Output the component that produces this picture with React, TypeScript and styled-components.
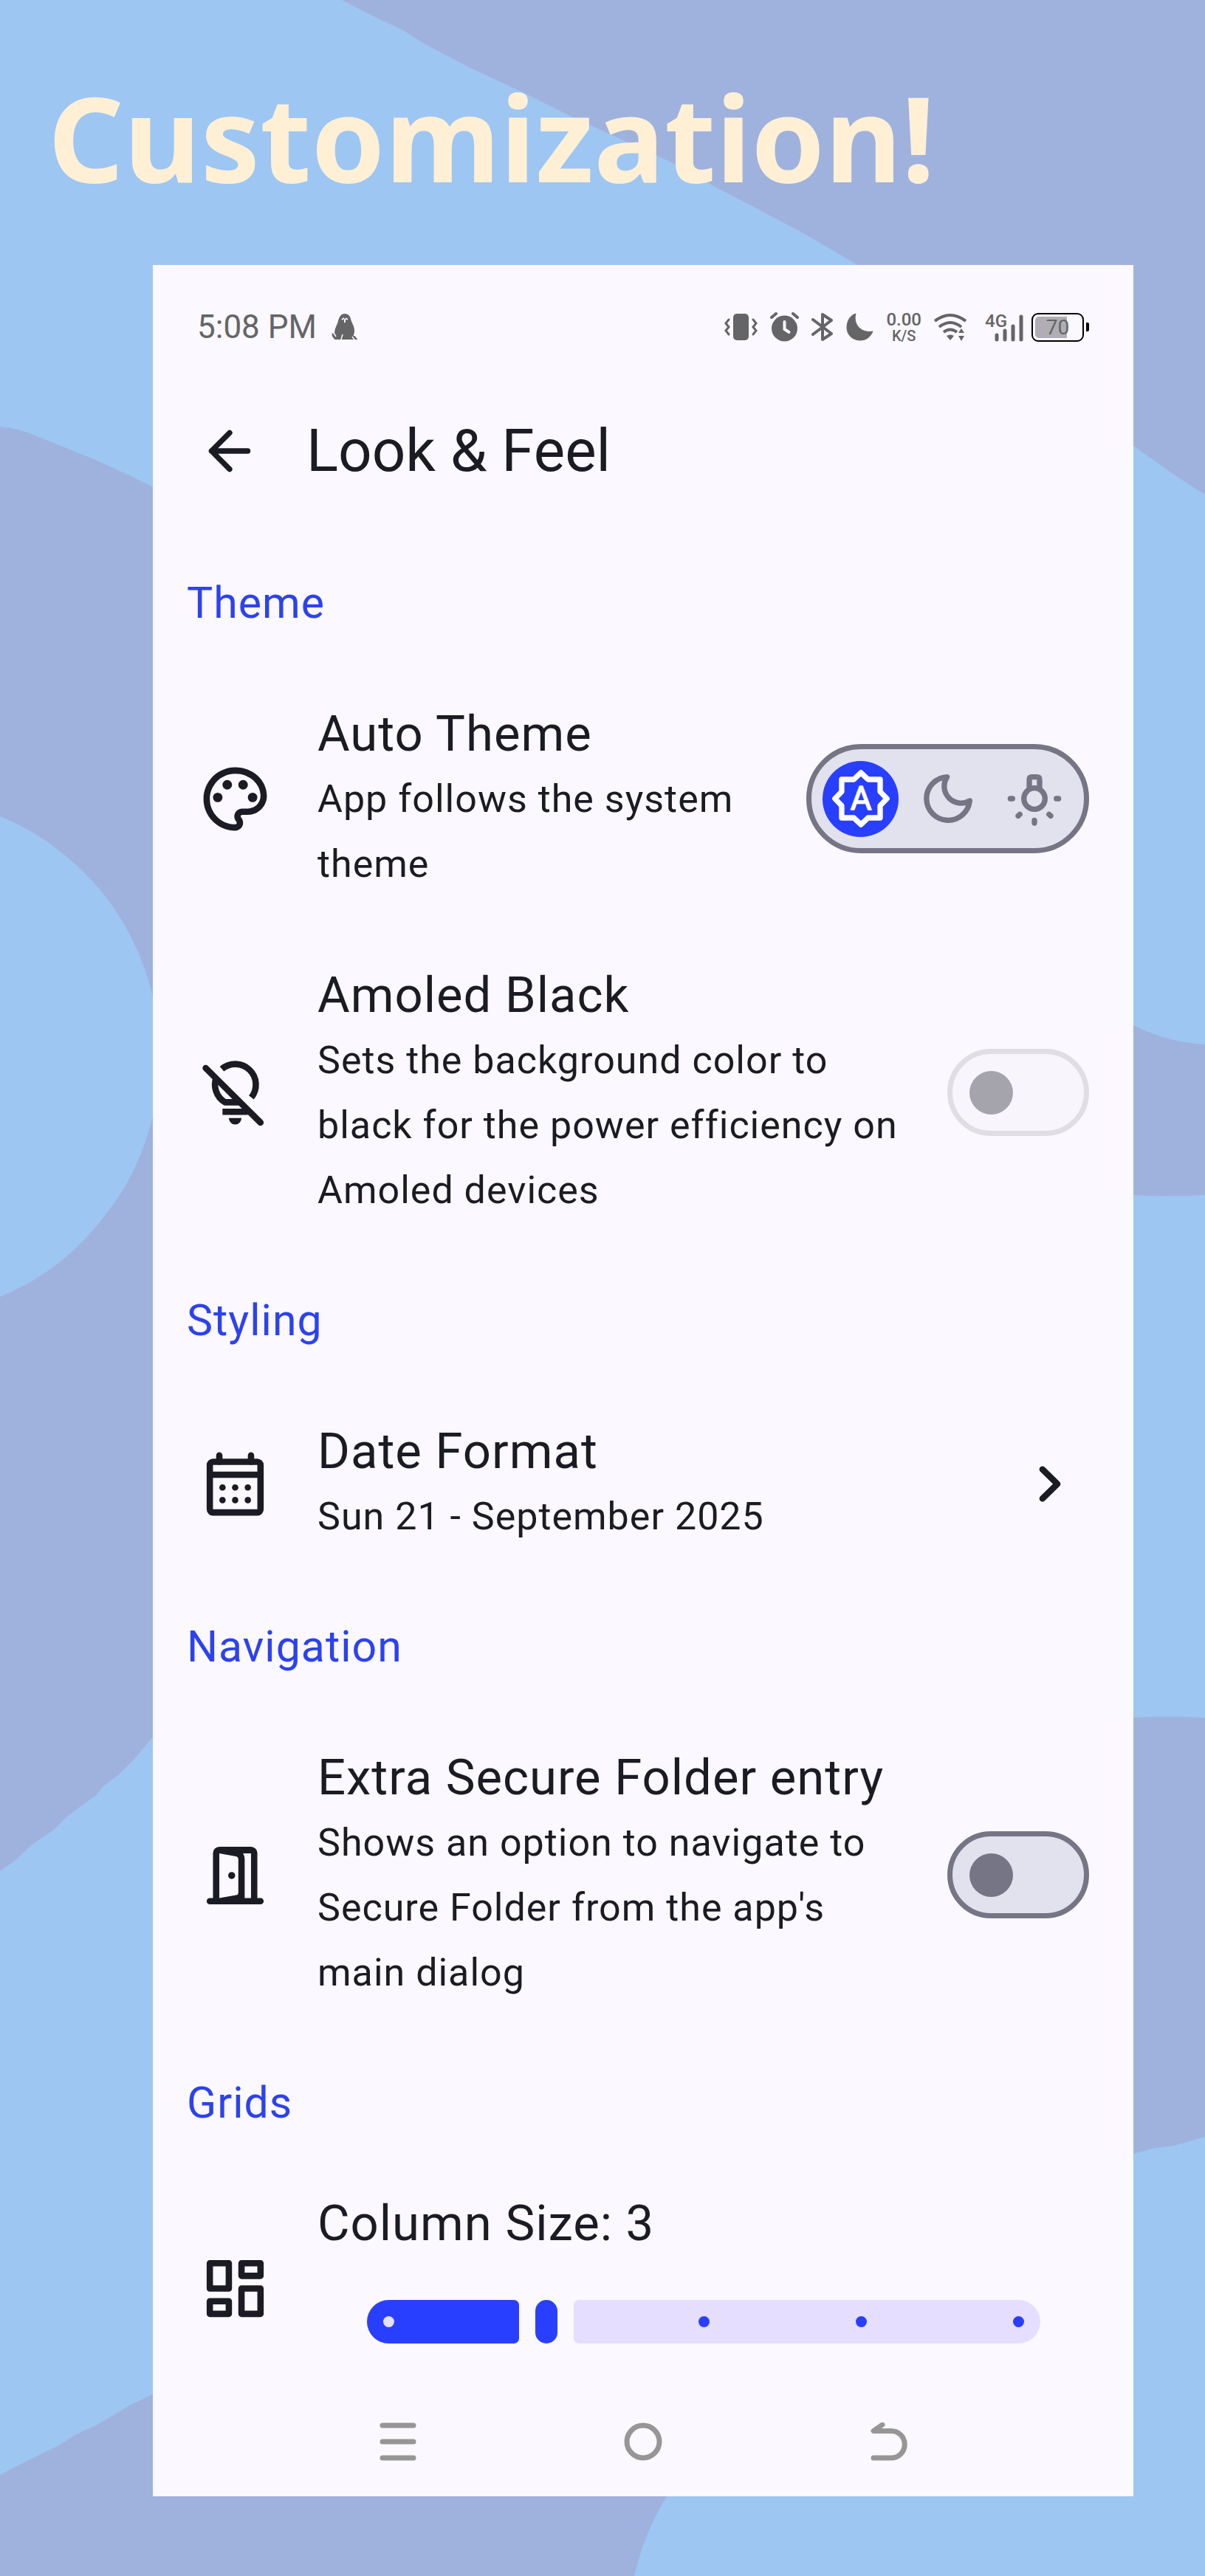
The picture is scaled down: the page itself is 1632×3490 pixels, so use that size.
import React, { useState } from "react";
import type { ReactNode } from "react";
import styled, { createGlobalStyle, css } from "styled-components";

const color = {
  sky: "#9dc6f2",
  haze: "#9fb2dd",
  cream: "#fff0d5",
  surface: "#fbf8ff",
  ink: "#1b1b24",
  primary: "#293fff",
  heading: "#2c42f0",
  outline: "#767585",
  track: "#e2e1ee",
  rail: "#e6deff",
  status: "#656567",
  nav: "#969696",
};

const GlobalStyle = createGlobalStyle`
  *, *::before, *::after { box-sizing: border-box; }
  body { margin: 0; background: ${color.sky}; }
`;

const Page = styled.main`
  position: relative;
  min-height: 100vh;
  padding: 0 97px 108px 207px;
  background: ${color.sky};
  font-family: Roboto, "Liberation Sans", sans-serif;
  color: ${color.ink};
`;

const Backdrop = styled.svg`
  position: absolute;
  inset: 0;
  width: 100%;
  height: 100%;
`;

const Headline = styled.h1`
  position: relative;
  margin: 0 0 0 -142px;
  padding: 91px 0 80px;
  font: 700 160px/188px "Noto Sans", "Open Sans", sans-serif;
  color: ${color.cream};
`;

const Screen = styled.section`
  position: relative;
  display: flex;
  flex-direction: column;
  background: ${color.surface};
`;

const StatusBar = styled.div`
  display: flex;
  align-items: center;
  justify-content: space-between;
  height: 133px;
  padding: 35px 60px 0;
  color: ${color.status};
`;

const StatusSide = styled.div<{ $gap: number }>`
  display: flex;
  align-items: center;
  gap: ${(p) => p.$gap}px;
`;

const Clock = styled.span`
  font-size: 44px;
  line-height: 52px;
`;

const Speed = styled.span`
  display: flex;
  flex-direction: column;
  align-items: center;
  font-size: 20px;
  font-weight: 500;
  line-height: 20px;
`;

const SpeedValue = styled.span`
  font-size: 24px;
  line-height: 24px;
`;

const Cellular = styled.span`
  display: grid;
  margin-left: 8px;
  > * { grid-area: 1 / 1; }
`;

const CellularLabel = styled.span`
  font-size: 24px;
  font-weight: 500;
  line-height: 24px;
`;

const Battery = styled.span`
  display: flex;
  align-items: center;
  gap: 3px;
  margin-left: -6px;
  &::after {
    content: "";
    width: 4px;
    height: 12px;
    border-radius: 0 2px 2px 0;
    background: #000;
  }
`;

const BatteryCell = styled.span`
  width: 71px;
  height: 39px;
  padding: 3px;
  border: 2px solid #000;
  border-radius: 9px;
`;

const BatteryFill = styled.span`
  display: block;
  height: 29px;
  border-radius: 5px;
  background: linear-gradient(90deg, #b0aeb4 70%, transparent 70%);
  font-size: 28px;
  line-height: 30px;
  text-align: center;
`;

const AppBar = styled.header`
  display: flex;
  align-items: center;
  gap: 60px;
  height: 237px;
  padding: 0 60px;
`;

const BackButton = styled.button`
  display: flex;
  padding: 0;
  border: 0;
  background: none;
  color: inherit;
`;

const Title = styled.h2`
  margin: 0;
  font-size: 80px;
  font-weight: 400;
  line-height: 104px;
`;

const SectionTitle = styled.h3`
  margin: 0;
  padding: 44px 46px;
  font-size: 59px;
  font-weight: 400;
  line-height: 88px;
  letter-spacing: 1px;
  color: ${color.heading};
`;

const rowLayout = css<{ $flush?: boolean }>`
  display: flex;
  align-items: center;
  gap: 60px;
  width: 100%;
  padding: ${(p) => (p.$flush ? "30px 60px 0" : "44px 60px")};
`;

const Row = styled.div<{ $flush?: boolean }>`
  ${rowLayout}
`;

const RowButton = styled.button`
  ${rowLayout}
  border: 0;
  background: none;
  color: inherit;
  font: inherit;
  text-align: left;
`;

const RowText = styled.span`
  flex: 1;
  min-width: 0;
  margin-right: -16px;
`;

const RowTitle = styled.span`
  display: block;
  font-size: 67px;
  line-height: 90px;
  letter-spacing: 1px;
`;

const RowNote = styled.span`
  display: block;
  font-size: 52px;
  line-height: 88px;
  letter-spacing: 1px;
`;

const Glyph = styled.svg<{ $size: number }>`
  flex: none;
  display: block;
  width: ${(p) => p.$size}px;
  height: ${(p) => p.$size}px;
`;

const Segments = styled.fieldset`
  display: flex;
  flex: none;
  width: 383px;
  height: 148px;
  margin: 0;
  padding: 0 8px;
  border: 7px solid ${color.outline};
  border-radius: 74px;
  background: ${color.track};
`;

const Segment = styled.label<{ $on: boolean }>`
  position: relative;
  display: grid;
  flex: 1;
  place-items: center;
  color: ${(p) => (p.$on ? "#fff" : color.outline)};
  &::before {
    content: "";
    grid-area: 1 / 1;
    width: 103px;
    height: 103px;
    border-radius: 50%;
    background: ${(p) => (p.$on ? color.primary : "transparent")};
  }
  > svg { grid-area: 1 / 1; z-index: 1; }
`;

const HiddenInput = styled.input`
  position: absolute;
  inset: 0;
  z-index: 2;
  width: 100%;
  height: 100%;
  margin: 0;
  opacity: 0;
  cursor: pointer;
`;

const Switch = styled.input`
  appearance: none;
  display: flex;
  flex: none;
  align-items: center;
  justify-content: flex-start;
  width: 192px;
  height: 118px;
  margin: 0;
  padding: 0 23px;
  border: 7px solid ${color.outline};
  border-radius: 59px;
  background: ${color.track};
  &::before {
    content: "";
    width: 59px;
    height: 59px;
    border-radius: 50%;
    background: ${color.outline};
  }
  &:checked {
    justify-content: flex-end;
    border-color: ${color.primary};
    background: ${color.primary};
  }
  &:checked::before { background: #fff; }
  &:disabled { border-color: #e0dee4; background: #f8f5fc; }
  &:disabled::before { background: #a5a4ad; }
`;

const SliderArea = styled.div`
  display: flex;
  align-items: center;
  height: 177px;
  padding: 0 82px 0 67px;
`;

const Rail = styled.div`
  position: relative;
  display: flex;
  flex: 1;
  gap: 22px;
  height: 59px;
`;

const RailActive = styled.span`
  flex: none;
  border-radius: 30px 7px 7px 30px;
  background: ${color.primary};
`;

const RailThumb = styled.span`
  flex: none;
  width: 30px;
  border-radius: 15px;
  background: ${color.primary};
`;

const RailRest = styled.span`
  flex: 1;
  border-radius: 7px 30px 30px 7px;
  background: ${color.rail};
`;

const Ticks = styled.span`
  position: absolute;
  inset: 0;
  display: flex;
  align-items: center;
  justify-content: space-between;
  padding: 0 22px;
`;

const Tick = styled.span<{ $state: "past" | "current" | "ahead" }>`
  width: 15px;
  height: 15px;
  border-radius: 50%;
  background: ${(p) => (p.$state === "past" ? color.rail : color.primary)};
`;

const NavBar = styled.nav`
  display: flex;
  height: 148px;
  padding: 0 12.5%;
`;

const NavButton = styled.button`
  display: grid;
  flex: 1;
  place-items: center;
  padding: 0;
  border: 0;
  background: none;
  color: ${color.nav};
`;

type IconProps = { size?: number; children: ReactNode };

const LineIcon = ({ size = 103, children }: IconProps) => (
  <Glyph
    $size={size}
    viewBox="0 0 24 24"
    fill="none"
    stroke="currentColor"
    strokeWidth="2"
    strokeLinecap="round"
    strokeLinejoin="round"
    aria-hidden="true"
  >
    {children}
  </Glyph>
);

const PaletteIcon = () => (
  <Glyph $size={103} viewBox="0 0 24 24" fill="currentColor" aria-hidden="true">
    <path d="M12 22C6.49 22 2 17.51 2 12S6.49 2 12 2s10 4.04 10 9c0 3.31-2.69 6-6 6h-1.77c-.28 0-.5.22-.5.5 0 .12.05.23.13.33.41.47.64 1.06.64 1.67A2.5 2.5 0 0 1 12 22zm0-18c-4.41 0-8 3.59-8 8s3.59 8 8 8c.28 0 .5-.22.5-.5a.54.54 0 0 0-.14-.35c-.41-.46-.63-1.05-.63-1.65a2.5 2.5 0 0 1 2.5-2.5H16c2.21 0 4-1.79 4-4 0-3.86-3.59-7-8-7z" />
    <circle cx="6.5" cy="11.5" r="1.5" />
    <circle cx="9.5" cy="7.5" r="1.5" />
    <circle cx="14.5" cy="7.5" r="1.5" />
    <circle cx="17.5" cy="11.5" r="1.5" />
  </Glyph>
);

const BulbOffIcon = () => (
  <LineIcon>
    <path d="M2.7 4.2 20 21.4" />
    <path strokeLinecap="butt" d="M7.8 4.5A6.5 6.5 0 0 1 17.1 13.5" />
    <path strokeLinecap="butt" d="M6.1 7A6.5 6.5 0 0 0 8.8 15H14" />
    <path strokeLinecap="butt" d="M8 18h8" />
    <path stroke="none" fill="currentColor" d="M10 20h4a2 2 0 0 1-4 0z" />
  </LineIcon>
);

const CalendarIcon = () => (
  <LineIcon>
    <rect x="4" y="5" width="16" height="16" rx="1" />
    <path strokeLinecap="butt" d="M4 9.1h16" />
    <path d="M7 3v2M17 3v2" />
    <g fill="currentColor" stroke="none">
      {[8, 12, 16].map((x) =>
        [13.1, 17.1].map((y) => <circle key={`${x}-${y}`} cx={x} cy={y} r="1" />)
      )}
    </g>
  </LineIcon>
);

const DoorIcon = () => (
  <Glyph $size={103} viewBox="0 0 24 24" fill="currentColor" aria-hidden="true">
    <path
      fillRule="evenodd"
      d="M7 3h10a2 2 0 0 1 2 2v14.2h1a1 1 0 0 1 0 2H4a1 1 0 0 1 0-2h1V5a2 2 0 0 1 2-2zM7 5.1v14.1l5.3-.9q.7-.1.7-.9V7q0-.8-.8-.95zM14.5 5.1q.5.8.5 1.9v12.2h2V5.1z"
    />
    <circle cx="10.9" cy="12.1" r="1.1" />
  </Glyph>
);

const DashboardIcon = () => (
  <LineIcon>
    <rect x="4" y="4" width="6" height="8" />
    <rect x="14" y="4" width="6" height="4" />
    <rect x="14" y="12" width="6" height="8" />
    <rect x="4" y="16" width="6" height="4" />
  </LineIcon>
);

const AutoIcon = () => (
  <LineIcon size={88}>
    <path d="M12 2.4 14.6 4.9H19.1V9.4L21.6 12 19.1 14.6V19.1H14.6L12 21.6 9.4 19.1H4.9V14.6L2.4 12 4.9 9.4V4.9H9.4z" />
    <text
      x="12"
      y="16.2"
      textAnchor="middle"
      fontFamily="Roboto, sans-serif"
      fontSize="12"
      fill="currentColor"
      strokeWidth=".4"
    >
      A
    </text>
  </LineIcon>
);

const MoonIcon = () => (
  <LineIcon size={88}>
    <path d="M11.6 4A8 8 0 1 0 20 12.8A6.25 6.25 0 0 1 11.6 4z" />
  </LineIcon>
);

const LampIcon = () => (
  <LineIcon size={88}>
    <circle cx="12" cy="12" r="3.9" />
    <path d="M10.1 8.2V5q0-1 1-1h1.8q1 0 1 1v3.2M3.1 12h.8M20.1 12h.8M12 20v1M6.6 17.8l-.6.6M17.4 17.8l.6.6" />
  </LineIcon>
);

const SealIcon = () => (
  <svg width="36" height="36" viewBox="0 0 36 36" fill="currentColor" aria-hidden="true">
    <path d="M18 0c5 0 7.500 3.500 8.500 9 .8 3 4.500 8 4.500 14 0 3-.6 5-1.600 7l2 0 4 5H4l-1-2-2-2-.5-5 3.500 2c0-9 3.500-12 5-18C10.500 4 13 0 18 0z" />
    <path d="m3 26 3 5M15 28l-2 7M28 31l3 4" stroke={color.surface} strokeWidth="1.500" fill="none" />
    <path d="m14 8 3-2M22 8l-3-2M18 7v5" stroke={color.surface} strokeWidth="2" fill="none" />
  </svg>
);

const StatusIcons = () => (
  <>
    <svg width="45" height="38" viewBox="0 0 45 38" aria-label="Vibrate">
      <rect x="12" y="1" width="21" height="36" rx="5" fill="currentColor" />
      <path d="m6 9-4 5 4 5-4 5 4 5M39 9l4 5-4 5 4 5-4 5" fill="none" stroke="currentColor" strokeWidth="3" strokeLinecap="round" />
    </svg>
    <svg width="39" height="40" viewBox="0 0 39 40" aria-label="Alarm">
      <circle cx="19.500" cy="22" r="17.500" fill="currentColor" />
      <path d="m2 7 6-5M37 7l-6-5" stroke="currentColor" strokeWidth="4" strokeLinecap="round" />
      <path d="M19.500 13v10l6 4" fill="none" stroke={color.surface} strokeWidth="4" strokeLinecap="round" />
    </svg>
    <svg width="30" height="40" viewBox="0 0 30 40" aria-label="Bluetooth">
      <path d="M2 10 27 29 15 37V3l12 8L2 30" fill="none" stroke="currentColor" strokeWidth="4" strokeLinecap="round" strokeLinejoin="round" />
    </svg>
    <svg width="37" height="38" viewBox="0 0 37 38" aria-label="Do not disturb">
      <path d="M13 1C9 14 19 28 36 25 32 34 26 37 19 37 8 37 1 29 1 20 1 10 6 3 13 1z" fill="currentColor" stroke="currentColor" strokeLinejoin="round" />
    </svg>
    <Speed>
      <SpeedValue>0.00</SpeedValue>K/S
    </Speed>
    <svg width="44" height="38" viewBox="0 0 44 38" aria-label="Wi-Fi">
      <g fill="none" stroke="currentColor" strokeWidth="4">
        <path d="M1 11Q22-5 43 11M7 19Q22 7 37 19M13 26Q22 19 31 26" />
      </g>
      <path d="M17 31q5-3 10 0l-5 6zM37 21l4 6h-8zM37 38l4-7h-8z" fill="currentColor" />
    </svg>
    <Cellular>
      <CellularLabel>4G</CellularLabel>
      <svg width="52" height="40" viewBox="0 0 52 40" aria-label="Signal">
        <path d="M16 31v6M27 25v12M38 19v18M49 6v31" stroke="currentColor" strokeWidth="5" strokeLinecap="round" />
      </svg>
    </Cellular>
    <Battery>
      <BatteryCell>
        <BatteryFill>70</BatteryFill>
      </BatteryCell>
    </Battery>
  </>
);

const Shapes = () => (
  <Backdrop viewBox="0 0 1632 3490" preserveAspectRatio="none" aria-hidden="true">
    <g fill={color.haze}>
      <path d="M463 0 510 24 546 41 578 61 635 91 708 125 770 156 916 223 963 250 1020 280 1088 316 1160 358 1535 604 1593 645 1632 670V0z" />
      <path d="M0 578Q24 580 50 591L127 622 173 643 207 660 400 900V2100L207 2353 183 2382 160 2405 140 2420 130 2432 92 2460 73 2479 42 2500 20 2521 0 2535z" />
      <path d="M0 3353 37 3334 80 3313 103 3298 130 3286 177 3258 207 3244 903 3382Q873 3430 859 3490H0z" />
      <path d="M1500 1370 1535 1389Q1580 1412 1632 1415V1619Q1583 1622 1535 1619L1500 1620z" />
      <path d="M1500 2328 1535 2327Q1580 2324 1632 2327V2895L1590 2907 1560 2911 1535 2918 1500 2922z" />
    </g>
    <path
      fill={color.sky}
      d="M0 1106Q53 1127 100 1169 180 1240 207 1350V1513Q187 1590 147 1640 90 1720 0 1757z"
    />
  </Backdrop>
);

const themes = [
  { id: "auto", label: "Auto", Icon: AutoIcon },
  { id: "dark", label: "Dark", Icon: MoonIcon },
  { id: "light", label: "Light", Icon: LampIcon },
];

const columnOptions = [2, 3, 4, 5, 6];

export default function App() {
  const [theme, setTheme] = useState("auto");
  const [secure, setSecure] = useState(false);
  const [columns, setColumns] = useState(3);
  const ratio = (columns - 2) / 4;

  return (
    <Page>
      <GlobalStyle />
      <Shapes />
      <Headline>Customization!</Headline>
      <Screen>
        <StatusBar>
          <StatusSide $gap={20}>
            <Clock>5:08 PM</Clock>
            <SealIcon />
          </StatusSide>
          <StatusSide $gap={17}>
            <StatusIcons />
          </StatusSide>
        </StatusBar>

        <AppBar>
          <BackButton type="button" aria-label="Back">
            <LineIcon size={88}>
              <path d="M18.700 12H5.300M12 5.300 5.300 12l6.700 6.700" />
            </LineIcon>
          </BackButton>
          <Title>Look &amp; Feel</Title>
        </AppBar>

        <SectionTitle>Theme</SectionTitle>
        <Row>
          <PaletteIcon />
          <RowText>
            <RowTitle>Auto Theme</RowTitle>
            <RowNote>App follows the system theme</RowNote>
          </RowText>
          <Segments aria-label="Theme mode">
            {themes.map(({ id, label, Icon }) => (
              <Segment key={id} $on={theme === id}>
                <HiddenInput
                  type="radio"
                  name="theme"
                  aria-label={label}
                  checked={theme === id}
                  onChange={() => setTheme(id)}
                />
                <Icon />
              </Segment>
            ))}
          </Segments>
        </Row>
        <Row>
          <BulbOffIcon />
          <RowText as="label" htmlFor="amoled">
            <RowTitle>Amoled Black</RowTitle>
            <RowNote>Sets the background color to black for the power efficiency on Amoled devices</RowNote>
          </RowText>
          <Switch id="amoled" type="checkbox" disabled />
        </Row>

        <SectionTitle>Styling</SectionTitle>
        <RowButton type="button">
          <CalendarIcon />
          <RowText>
            <RowTitle>Date Format</RowTitle>
            <RowNote>Sun 21 - September 2025</RowNote>
          </RowText>
          <LineIcon>
            <path d="m9.300 7.400 4.700 4.600-4.700 4.600" />
          </LineIcon>
        </RowButton>

        <SectionTitle>Navigation</SectionTitle>
        <Row>
          <DoorIcon />
          <RowText as="label" htmlFor="secure">
            <RowTitle>Extra Secure Folder entry</RowTitle>
            <RowNote>Shows an option to navigate to Secure Folder from the app's main dialog</RowNote>
          </RowText>
          <Switch
            id="secure"
            type="checkbox"
            checked={secure}
            onChange={(e) => setSecure(e.target.checked)}
          />
        </Row>

        <SectionTitle>Grids</SectionTitle>
        <Row $flush>
          <DashboardIcon />
          <RowText as="div">
            <RowTitle as="label" htmlFor="columns">
              Column Size: {columns}
            </RowTitle>
            <SliderArea>
              <Rail>
                <RailActive style={{ width: `calc(${ratio} * (100% - 58px) - 8px)` }} />
                <RailThumb />
                <RailRest />
                <Ticks>
                  {columnOptions.map((n) => (
                    <Tick key={n} $state={n < columns ? "past" : n > columns ? "ahead" : "current"} />
                  ))}
                </Ticks>
                <HiddenInput
                  id="columns"
                  type="range"
                  min={2}
                  max={6}
                  value={columns}
                  onChange={(e) => setColumns(Number(e.target.value))}
                />
              </Rail>
            </SliderArea>
          </RowText>
        </Row>

        <NavBar>
          <NavButton type="button" aria-label="Recent apps">
            <svg width="52" height="52" viewBox="0 0 52 52">
              <path d="M5 4h42M5 26h42M5 48h42" stroke="currentColor" strokeWidth="7" strokeLinecap="round" />
            </svg>
          </NavButton>
          <NavButton type="button" aria-label="Home">
            <svg width="52" height="52" viewBox="0 0 52 52">
              <circle cx="26" cy="26" r="22" fill="none" stroke="currentColor" strokeWidth="7" />
            </svg>
          </NavButton>
          <NavButton type="button" aria-label="Back to previous app">
            <svg width="52" height="52" viewBox="0 0 52 52">
              <path
                d="M18 3 6 11.500H30a18 18 0 0 1 0 36.500H6"
                fill="none"
                stroke="currentColor"
                strokeWidth="7"
                strokeLinecap="round"
                strokeLinejoin="round"
              />
            </svg>
          </NavButton>
        </NavBar>
      </Screen>
    </Page>
  );
}
